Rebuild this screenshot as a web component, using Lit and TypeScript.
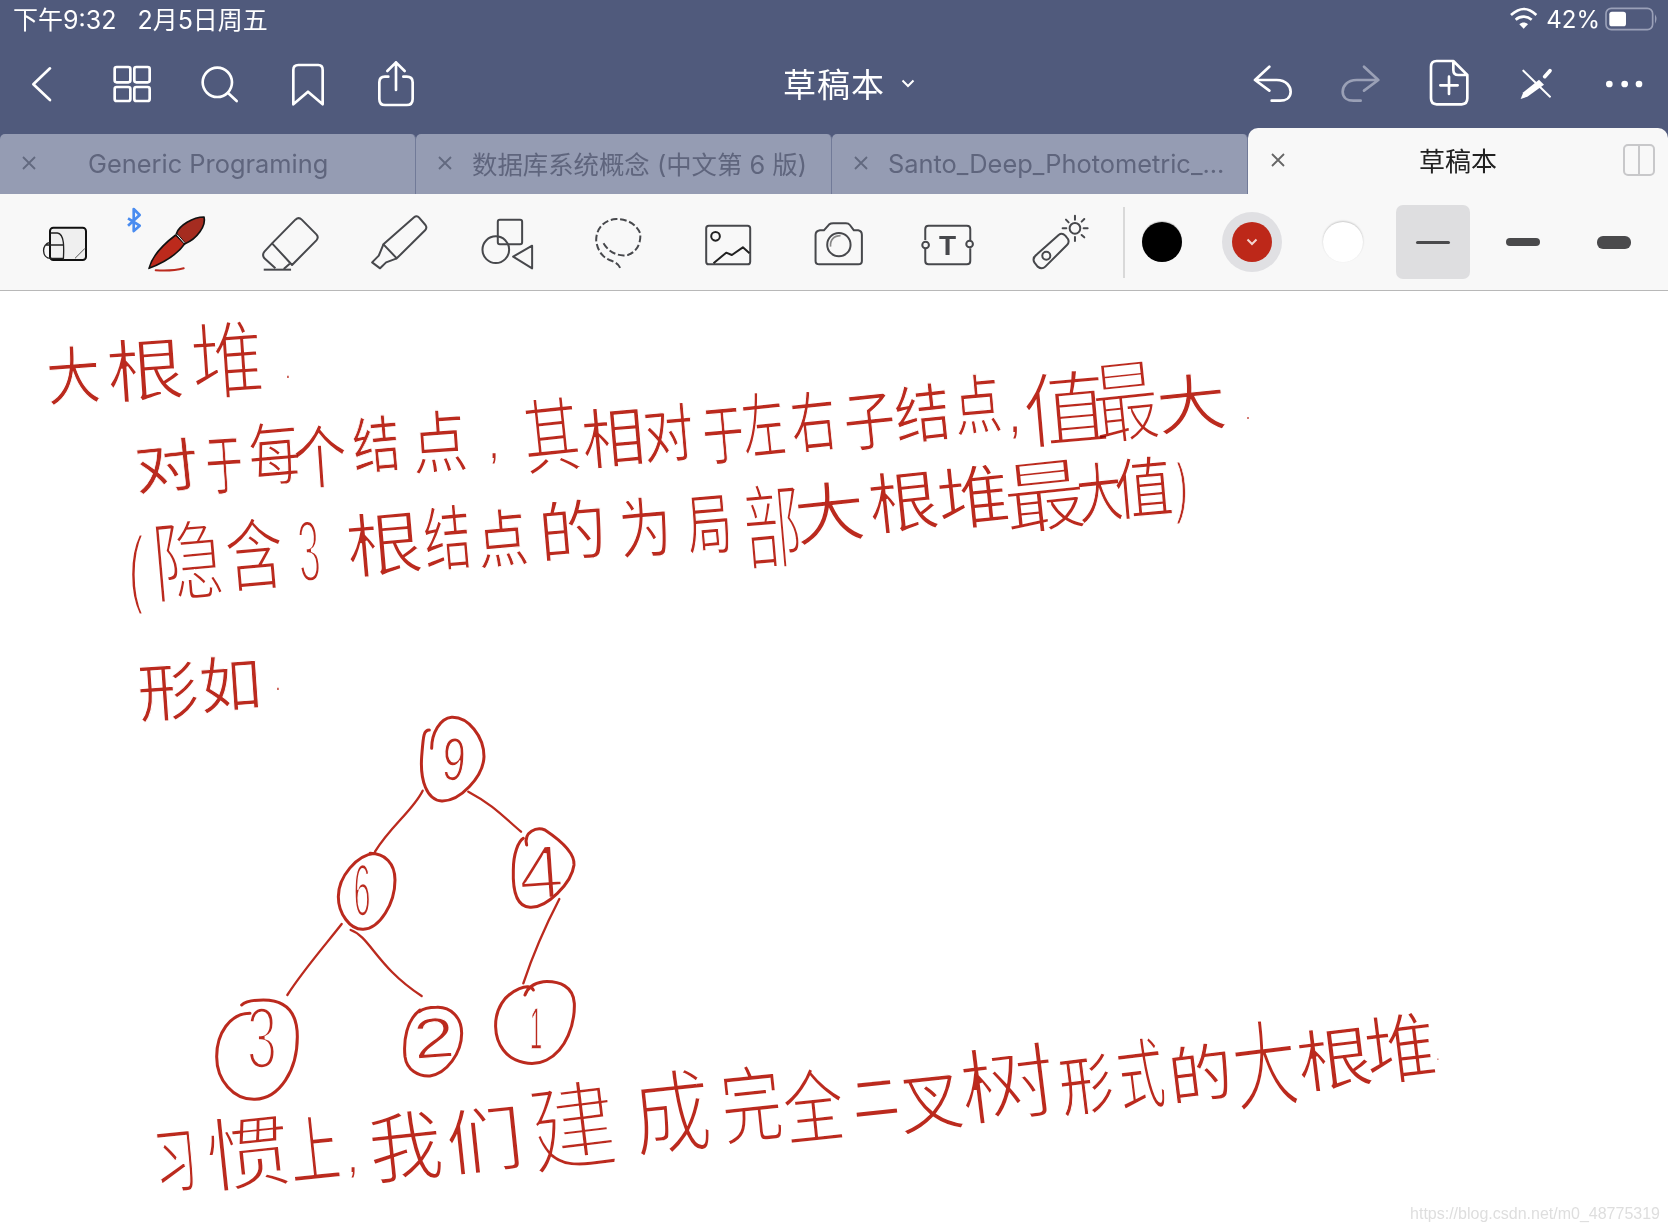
import { LitElement, html, css, svg } from "lit";
import { customElement } from "lit/decorators.js";

type Ch = [string, number, number, number, number, number?];

const CANVAS_TOP = 291;

const HAND: Ch[] = [
  // 大根堆
  ["大", 47, 98, 342, 402, -4], ["根", 108, 182, 333, 398, -4], ["堆", 192, 261, 315, 395, -4],
  // 对于每个结点，其相对于左右子结点，值最大
  ["对", 135, 196, 436, 490, -6], ["于", 206, 241, 430, 492, -4], ["每", 249, 298, 417, 482, -5],
  ["个", 294, 345, 420, 485, -4], ["结", 353, 398, 412, 470, -5], ["点", 412, 465, 405, 470, -4],
  ["其", 524, 578, 392, 470, -6], ["相", 583, 643, 403, 465, -5], ["对", 644, 692, 400, 460, -5],
  ["于", 703, 742, 400, 462, -5], ["左", 742, 783, 387, 455, -6], ["右", 791, 834, 386, 449, -6],
  ["子", 844, 893, 386, 447, -6], ["结", 895, 948, 380, 440, -6], ["点", 954, 999, 370, 432, -5],
  ["值", 1024, 1105, 365, 442, -5], ["最", 1093, 1156, 353, 438, -6], ["大", 1158, 1224, 370, 430, -6],
  // （隐含了根结点的为局部大根堆最大值）
  ["隐", 153, 220, 513, 597, -5], ["含", 226, 282, 512, 587, -5],
  ["根", 347, 420, 507, 573, -5], ["结", 424, 469, 500, 567, -5], ["点", 478, 526, 505, 565, -5],
  ["的", 539, 604, 495, 558, -5], ["为", 620, 670, 492, 555, -5], ["局", 687, 730, 488, 552, -5],
  ["部", 744, 799, 477, 565, -5], ["大", 795, 862, 477, 540, -6], ["根", 869, 936, 466, 529, -6],
  ["堆", 938, 1007, 460, 525, -6], ["最", 1005, 1083, 453, 528, -6], ["大", 1077, 1120, 458, 520, -6],
  ["值", 1115, 1170, 452, 515, -5],
  // 形如
  ["形", 139, 197, 657, 718, -4], ["如", 200, 259, 652, 710, -4],
  // 习惯上，我们建成完全二叉树形式的大根堆
  ["习", 155, 195, 1122, 1190, -6], ["惯", 207, 287, 1110, 1186, -6], ["上", 290, 338, 1110, 1180, -6],
  ["我", 370, 440, 1105, 1178, -6], ["们", 447, 520, 1102, 1170, -6], ["建", 530, 613, 1075, 1167, -7],
  ["成", 634, 708, 1063, 1150, -6], ["完", 722, 780, 1060, 1140, -6], ["全", 784, 842, 1063, 1140, -6],
  ["二", 853, 896, 1072, 1118, -6], ["叉", 900, 961, 1066, 1130, -6], ["树", 961, 1053, 1040, 1118, -7],
  ["形", 1060, 1111, 1050, 1112, -7], ["式", 1118, 1162, 1033, 1107, -7], ["的", 1169, 1230, 1040, 1100, -7],
  ["大", 1233, 1295, 1013, 1105, -7], ["根", 1298, 1370, 1023, 1087, -7], ["堆", 1366, 1434, 1008, 1080, -7],
];

// Latin marks: char, centre x, centre y of the ink, font size, x scale
const MARKS: [string, number, number, number, number][] = [
  [".", 288, 378, 20, 0.7], [",", 494, 458, 44, 0.7], [".", 1248, 419, 18, 0.7],
  [",", 1015, 431, 52, 0.7], [".", 278, 690, 20, 0.7], [",", 353, 1172, 44, 0.7],
  [".", 1438, 1060, 12, 0.7],
];
const BRACKETS: [string, number, number, number, number][] = [
  ["(", 136, 567, 88, 0.5], [")", 1182, 487, 66, 0.5],
];

// Digits: char, x0, x1, y0, y1
const DIGITS: Ch[] = [
  ["3", 298, 320, 520, 583, -4],
  ["9", 442, 465, 738, 782, 4], ["6", 353, 370, 863, 917, 0], ["4", 518, 563, 845, 900, -4],
  ["3", 247, 277, 1007, 1070, 0], ["2", 412, 455, 1017, 1058, -4], ["1", 530, 542, 1007, 1050, 0],
];

const RED = "#bb2a1e";
const TARGET = 3.4;

// Evens out the stroke weight, which a font would otherwise scale with its size.
const weigh = (fs: number, natural: number) => {
  const d = fs * natural - TARGET;
  return `-webkit-text-stroke:${Math.abs(d).toFixed(2)}px ${d > 0 ? "#fff" : RED}`;
};
const handStyle = (c: Ch) => {
  const [, x0, x1, y0, y1, r = -5] = c;
  const h = y1 - y0;
  const fs = h * 1.06;
  return `left:${(x0 + x1) / 2}px;top:${(y0 + y1) / 2 - CANVAS_TOP}px;font-size:${fs}px;transform:translate(-50%,-50%) rotate(${r}deg) scaleX(${((x1 - x0) / h).toFixed(3)});${weigh(fs, 0.07)}`;
};
const digitStyle = (c: Ch) => {
  const [, x0, x1, y0, y1, r = 0] = c;
  const fs = (y1 - y0) / 0.72;
  const sx = Math.min(1.3, (x1 - x0) / (0.55 * fs));
  return `left:${(x0 + x1) / 2}px;top:${(y0 + y1) / 2 - CANVAS_TOP}px;font-size:${fs}px;transform:translate(-50%,-50%) rotate(${r}deg) scaleX(${sx.toFixed(3)});${weigh(fs, 0.08)}`;
};
const markStyle = (m: [string, number, number, number, number]) =>
  `left:${m[1]}px;top:${m[2] - CANVAS_TOP - 0.33 * m[3]}px;font-size:${m[3]}px;transform:translate(-50%,-50%) scaleX(${m[4]})`;
const bracketStyle = (m: [string, number, number, number, number]) =>
  `left:${m[1]}px;top:${m[2] - CANVAS_TOP}px;font-size:${m[3]}px;transform:translate(-50%,-50%) scaleX(${m[4]});${weigh(m[3], 0.07)}`;

const Z7 = "translate(30,205) scale(.33333)";
const Z8 = "translate(470,205) scale(.33333)";
const Z9 = "translate(900,205) scale(.33333)";
const Z10 = "translate(20,55) scale(.33333)";
const Z11 = "translate(1240,0) scale(.33333)";

const TOOLS = [
  svg`<g transform=${Z7}>
    <rect x="60" y="68" width="108" height="97" rx="10" fill="#efefef" stroke="#111" stroke-width="6"/>
    <path d="M62 84 H82 C104 86 102 130 100 165 M46 120 H100 M100 160 H62 C34 160 34 116 60 112" fill="none" stroke="#222" stroke-width="4"/>
    <path d="M135 160 L165 130" stroke="#555" stroke-width="3"/>
  </g>`,
  svg`<g transform=${Z7}>
    <path d="M295 40 L330 62 L312 78 V12 L330 30 L295 62" fill="none" stroke="#4a8cf0" stroke-width="8" stroke-linejoin="round"/>
    <path d="M358 190 C368 150 405 115 438 90 L465 116 C445 145 405 172 358 190 Z" fill="#bc2a1c" stroke="#111" stroke-width="5" stroke-linejoin="round"/>
    <path d="M440 86 C448 62 490 36 523 36 C530 62 502 102 466 116 Z" fill="#a52c20" stroke="#111" stroke-width="5" stroke-linejoin="round"/>
    <path d="M442 89 L464 114" stroke="#fff" stroke-width="3"/>
    <path d="M378 196 C410 198 440 196 462 190" fill="none" stroke="#bb2a1e" stroke-width="6" stroke-linecap="round"/>
  </g>`,
  svg`<g transform=${Z7} fill="none" stroke="#47484c" stroke-width="6" stroke-linejoin="round">
    <path d="M725 115 L795 44 Q805 35 814 44 L858 88 Q866 97 858 106 L785 180 Z"/>
    <path d="M725 115 L702 140 Q694 150 702 160 L735 190 M760 192 L778 176"/>
    <path d="M700 194 H782"/>
  </g>`,
  svg`<g transform=${Z7} fill="none" stroke="#47484c" stroke-width="6" stroke-linejoin="round">
    <path d="M1060 118 L1152 37 Q1160 30 1167 38 L1186 60 Q1192 68 1185 76 L1100 160 Z"/>
    <path d="M1060 118 L1046 152 L1026 172 L1050 190 L1068 172 L1100 160"/>
  </g>`,
  svg`<g transform=${Z8} fill="none" stroke="#47484c" stroke-width="6" stroke-linejoin="round">
    <rect x="84" y="44" width="73" height="74" rx="6"/>
    <circle cx="78" cy="134" r="40"/>
    <path d="M187 122 L130 155 L187 190 Z"/>
  </g>`,
  svg`<g transform=${Z8} fill="none" stroke="#47484c" stroke-width="6">
    <path stroke-dasharray="20 8" d="M402 115 C420 145 450 155 475 150 C505 140 515 110 512 85 C500 55 470 42 440 42 C400 45 380 75 380 105 C382 130 395 155 420 165 C440 172 450 180 453 192"/>
  </g>`,
  svg`<g transform=${Z8} fill="none" stroke="#47484c" stroke-width="6" stroke-linejoin="round">
    <rect x="708" y="62" width="132" height="116" rx="8"/>
    <circle cx="736" cy="94" r="13" stroke="#222"/>
    <path d="M730 175 L768 143 L785 150 L818 127 L838 145" stroke="#222"/>
  </g>`,
  svg`<g transform=${Z8} fill="none" stroke="#47484c" stroke-width="6" stroke-linejoin="round">
    <path d="M1037 90 Q1037 78 1050 76 H1062 L1078 58 Q1082 55 1090 55 H1128 Q1136 55 1140 60 L1152 76 H1165 Q1176 78 1176 90 V168 Q1176 178 1165 178 H1048 Q1037 178 1037 168 Z"/>
    <circle cx="1107" cy="119" r="35"/>
    <path d="M1082 125 C1080 105 1092 92 1112 92" stroke="#888" stroke-width="5"/>
  </g>`,
  svg`<g transform=${Z9} fill="none" stroke="#47484c" stroke-width="6" stroke-linejoin="round">
    <path d="M77 105 V72 Q77 62 87 62 H202 Q212 62 212 72 V105 M212 130 V168 Q212 178 202 178 H87 Q77 178 77 168 V132"/>
    <circle cx="78" cy="120" r="10"/><circle cx="210" cy="117" r="10"/>
    <text x="144" y="150" text-anchor="middle" font-family="Liberation Sans, sans-serif" font-weight="700" font-size="84" fill="#47484c" stroke="none">T</text>
  </g>`,
  svg`<g transform=${Z9} fill="none" stroke="#47484c" stroke-width="6" stroke-linejoin="round" stroke-linecap="round">
    <path d="M410 148 L475 90 Q485 82 495 92 L503 102 Q508 112 500 120 L435 185 Q425 195 412 185 L402 172 Q395 158 410 148 Z"/>
    <circle cx="438" cy="152" r="12"/>
    <circle cx="524" cy="70" r="16"/>
    <path d="M524 32 V44 M524 96 V108 M487 70 H498 M550 70 H562 M552 42 L544 50 M552 97 L544 90 M497 44 L505 52"/>
  </g>`,
];

const NAV_LEFT = [
  svg`<path d="M90 40 L40 88 L90 135"/>`,
  svg`<rect x="284" y="36" width="47" height="46" rx="6"/><rect x="343" y="36" width="46" height="46" rx="6"/><rect x="284" y="96" width="47" height="42" rx="6"/><rect x="343" y="96" width="46" height="42" rx="6"/>`,
  svg`<circle cx="592" cy="82" r="44"/><path d="M625 115 L650 138"/>`,
  svg`<path d="M820 148 V45 Q820 30 835 30 H895 Q908 30 908 45 V148 L864 110 Z"/>`,
  svg`<path d="M1128 22 V105 M1102 48 L1128 22 L1154 48 M1105 65 H1095 Q1078 65 1078 82 V132 Q1078 150 1095 150 H1160 Q1178 150 1178 132 V82 Q1178 65 1160 65 H1150"/>`,
];

const NAV_RIGHT = [
  svg`<path d="M88 200 L45 240 L88 272 M45 240 H110 C140 240 152 260 152 275 C152 295 135 302 120 302 H95"/>`,
  svg`<path stroke="#9aa0b6" d="M372 200 L415 240 L372 272 M415 240 H350 C320 240 308 260 308 275 C308 295 325 302 340 302 H362"/>`,
  svg`<path d="M640 183 H590 Q573 183 573 200 V295 Q573 313 590 313 H665 Q682 313 682 295 V225 Z M640 183 V210 Q640 225 655 225 H682 M627 230 V282 M601 256 H653"/>`,
  svg`<path d="M850 212 L930 290" stroke-width="6"/><path d="M930 212 L914 230" stroke-width="11"/><path d="M897 239 L912 254 L862 290 L842 297 L850 277 Z" fill="#fff" stroke="none"/>`,
  svg`<g fill="#fff" stroke="none"><circle cx="1108" cy="252" r="10"/><circle cx="1154" cy="252" r="10"/><circle cx="1197" cy="252" r="10"/></g>`,
];

@customElement("app-root")
export class AppRoot extends LitElement {
  static styles = css`
    :host {
      display: block;
      width: 1668px;
      height: 1231px;
      overflow: hidden;
      background: #fff;
      font-family: Inter, "Noto Sans CJK SC", sans-serif;
    }
    .page { display: flex; flex-direction: column; height: 100%; }
    .head { background: #505a7c; color: #fff; }
    .status {
      height: 38px;
      box-sizing: border-box;
      padding: 0 16px 3px 13px;
      display: flex;
      align-items: center;
      justify-content: space-between;
      font-size: 25px;
    }
    .status-left { display: flex; gap: 21px; }
    .status-right { display: flex; align-items: center; margin-top: 3px; }
    .status-right svg { display: block; overflow: visible; }
    .pct { font-size: 24px; margin: 0 5px 0 8px; }
    .nav { height: 96px; display: grid; grid-template-columns: 440px 1fr 440px; align-items: center; }
    .icons { display: flex; }
    .icons svg {
      display: block;
      width: 88px;
      height: 96px;
      fill: none;
      stroke: #fff;
      stroke-linecap: round;
      stroke-linejoin: round;
      overflow: visible;
    }
    .title {
      display: flex;
      justify-content: center;
      align-items: center;
      gap: 16px;
      padding: 0 0 6px 30px;
      font-size: 33px;
      letter-spacing: 1px;
    }
    .title svg { display: block; width: 14px; height: 9px; }
    .tabs { height: 60px; display: flex; }
    .tab {
      flex: 1 1 0;
      background: #959cb3;
      border-right: 1px solid #717a98;
      border-radius: 5px 5px 0 0;
      color: #5f657d;
      font-size: 25.4px;
      display: flex;
      align-items: center;
      white-space: nowrap;
      box-sizing: border-box;
      padding-bottom: 2px;
    }
    .tab .x { margin: 0 19px 0 21px; flex: none; }
    .tab.wide .x { margin-right: 51px; }
    .x { display: block; width: 16px; height: 16px; stroke: #62697f; stroke-width: 1.8; fill: none; }
    .tab.active {
      background: #f8f8f8;
      border: 0;
      border-radius: 10px 10px 0 0;
      margin-top: -6px;
      color: #222;
      display: grid;
      grid-template-columns: 1fr auto 1fr;
      padding-bottom: 3px;
      flex: 0 0 420px;
      font-size: 26px;
    }
    .tab.active .x { margin: 0 0 0 22px; stroke: #666; }
    .split { justify-self: end; margin-right: 13px; display: block; width: 32px; height: 32px; }
    .toolbar {
      height: 96px;
      background: #f8f8f8;
      border-bottom: 1px solid #b8b8b8;
      display: flex;
      align-items: center;
      padding-left: 12px;
      flex: none;
    }
    .tool { display: block; width: 110.3px; height: 96px; flex: none; overflow: visible; }
    .divider { width: 2px; height: 71px; background: #d9d9d9; margin: 0 17px 0 8px; flex: none; }
    .swatches { display: flex; align-items: center; gap: 40.5px; margin-right: 33px; }
    .dot { width: 40px; height: 40px; border-radius: 50%; flex: none; }
    .dot.black { background: #000; box-shadow: 0 -1px 1px rgba(0, 0, 0, 0.2); }
    .dot.white { background: #fff; box-shadow: 0 -1px 2px rgba(0, 0, 0, 0.2); }
    .ring {
      width: 60px;
      height: 60px;
      border-radius: 50%;
      background: #e0e0e3;
      display: grid;
      place-items: center;
      flex: none;
    }
    .dot.red { background: #bd2819; display: grid; place-items: center; }
    .dot.red svg { display: block; width: 12px; height: 8px; }
    .widths { display: flex; gap: 16.5px; }
    .width { width: 74px; height: 74px; border-radius: 7px; display: grid; place-items: center; }
    .width.on { background: #dedee0; }
    .bar { width: 34px; background: #4a4a4c; border-radius: 6px; }
    .bar.s { height: 3px; }
    .bar.m { height: 8px; }
    .bar.l { height: 13px; }
    .canvas { position: relative; flex: 1; background: #fff; overflow: hidden; }
    .hand {
      position: absolute;
      line-height: 1;
      white-space: nowrap;
      color: #bb2a1e;
      font-family: "Noto Sans CJK SC", sans-serif;
      font-weight: 400;
      mix-blend-mode: multiply;
    }
    .latin { font-family: "Liberation Sans", sans-serif; }
    .diagram { position: absolute; left: 0; top: 0; width: 1668px; height: 940px; fill: none; stroke: #bb2a1e; stroke-linecap: round; }
    .mark {
      position: absolute;
      right: 8px;
      bottom: 8px;
      font-family: "Liberation Sans", sans-serif;
      font-size: 16px;
      color: #dedede;
    }
  `;

  private x() {
    return html`<svg class="x" viewBox="0 0 16 16"><path d="M2 2 L14 14 M14 2 L2 14" /></svg>`;
  }

  render() {
    return html`
      <div class="page">
        <header class="head">
          <div class="status">
            <div class="status-left"><span>下午9:32</span><span>2月5日周五</span></div>
            <div class="status-right">
              <svg width="28" height="20" viewBox="1513 10 28 20">
                <g transform=${Z11} fill="none" stroke="#fff" stroke-width="8">
                  <path d="M822 48 C850 24 872 24 898 48 M836 62 C850 50 870 50 884 62" />
                  <path d="M847 76 C855 69 865 69 873 76 L860 89 Z" fill="#fff" stroke="none" />
                </g>
              </svg>
              <span class="pct">42%</span>
              <svg width="47" height="24" viewBox="1605 8 47 24">
                <g transform=${Z11}>
                  <rect x="1098" y="28" width="140" height="64" rx="16" fill="none" stroke="#9aa0b8" stroke-width="5" />
                  <rect x="1108" y="38" width="50" height="44" rx="8" fill="#fff" />
                  <path d="M1245 46 Q1254 60 1245 74 Z" fill="#9aa0b8" />
                </g>
              </svg>
            </div>
          </div>
          <nav class="nav">
            <div class="icons">
              ${NAV_LEFT.map(
                (p, i) => html`<svg viewBox="${88 * i} 38 88 96"><g transform=${Z10} stroke-width="8">${p}</g></svg>`
              )}
            </div>
            <div class="title">
              <span>草稿本</span>
              <svg viewBox="0 0 14 9"><path d="M1.5 1.5 L7 7 L12.5 1.5" fill="none" stroke="#fff" stroke-width="2" /></svg>
            </div>
            <div class="icons">
              ${NAV_RIGHT.map(
                (p, i) => html`<svg viewBox="${1228 + 88 * i} 38 88 96"><g transform=${Z11} stroke-width="8">${p}</g></svg>`
              )}
            </div>
          </nav>
          <div class="tabs">
            <div class="tab wide">${this.x()}<span>Generic Programing</span></div>
            <div class="tab">${this.x()}<span>数据库系统概念 (中文第 6 版)</span></div>
            <div class="tab">${this.x()}<span>Santo_Deep_Photometric_...</span></div>
            <div class="tab active">
              ${this.x()}<span>草稿本</span>
              <svg class="split" viewBox="0 0 32 32">
                <rect x="1" y="1" width="30" height="30" rx="4" fill="none" stroke="#c8c8ca" stroke-width="2" />
                <path d="M16 1 V31" stroke="#c8c8ca" stroke-width="2" />
              </svg>
            </div>
          </div>
        </header>
        <div class="toolbar">
          ${TOOLS.map(
            (t, i) => html`<svg class="tool" viewBox="${(12 + 110.3 * i).toFixed(1)} 194 110.3 96">${t}</svg>`
          )}
          <div class="divider"></div>
          <div class="swatches">
            <div class="dot black"></div>
            <div class="ring">
              <div class="dot red">
                <svg viewBox="0 0 12 8"><path d="M1.5 1.5 L6 6 L10.5 1.5" fill="none" stroke="#f3d6d2" stroke-width="2" /></svg>
              </div>
            </div>
            <div class="dot white"></div>
          </div>
          <div class="widths">
            <div class="width on"><div class="bar s"></div></div>
            <div class="width"><div class="bar m"></div></div>
            <div class="width"><div class="bar l"></div></div>
          </div>
        </div>
        <main class="canvas">
          ${HAND.map((c) => html`<span class="hand" style=${handStyle(c)}>${c[0]}</span>`)}
          ${MARKS.map((m) => html`<span class="hand latin" style=${markStyle(m)}>${m[0]}</span>`)}
          ${BRACKETS.map((m) => html`<span class="hand latin" style=${bracketStyle(m)}>${m[0]}</span>`)}
          ${DIGITS.map((d) => html`<span class="hand latin" style=${digitStyle(d)}>${d[0]}</span>`)}
          <svg class="diagram" viewBox="0 291 1668 940">
            <g transform="translate(140,700) scale(.33333)" stroke-width="9">
              <path d="M868 90 C850 90 850 110 845 170 C840 240 860 300 905 303 C960 305 1030 230 1032 170 C1032 110 985 50 935 52 C900 55 875 100 875 145" />
              <path d="M705 460 C650 465 595 530 595 590 C595 640 630 690 670 688 C720 685 765 610 765 540 C765 490 735 460 690 460" />
              <path d="M1160 435 C1150 395 1190 380 1215 390 C1260 420 1305 460 1302 495 C1295 550 1220 625 1170 622 C1130 620 1118 570 1120 510 C1120 460 1135 425 1150 415" />
              <path d="M330 940 C270 940 230 1000 230 1070 C230 1140 280 1200 345 1198 C420 1195 472 1110 472 1010 C472 940 440 900 370 900 C340 900 315 905 305 915" />
              <path d="M840 930 C800 960 790 1020 795 1070 C800 1110 835 1130 870 1128 C920 1120 965 1060 965 1000 C965 950 930 920 890 922 C870 922 850 925 838 935" />
              <path d="M1180 870 C1170 845 1110 870 1085 910 C1060 950 1060 1010 1090 1050 C1120 1090 1180 1100 1220 1080 C1280 1050 1305 970 1303 910 C1300 860 1260 842 1210 845 C1190 848 1165 855 1155 885" />
              <path d="M848 272 C820 330 750 380 705 455" stroke-width="7" />
              <path d="M985 275 C1060 315 1090 350 1143 395" stroke-width="7" />
              <path d="M605 672 C560 730 490 810 442 885" stroke-width="7" />
              <path d="M632 690 C690 710 710 800 845 888" stroke-width="7" />
              <path d="M1258 597 C1215 680 1180 760 1150 850" stroke-width="7" />
            </g>
          </svg>
          <span class="mark">https://blog.csdn.net/m0_48775319</span>
        </main>
      </div>
    `;
  }
}
